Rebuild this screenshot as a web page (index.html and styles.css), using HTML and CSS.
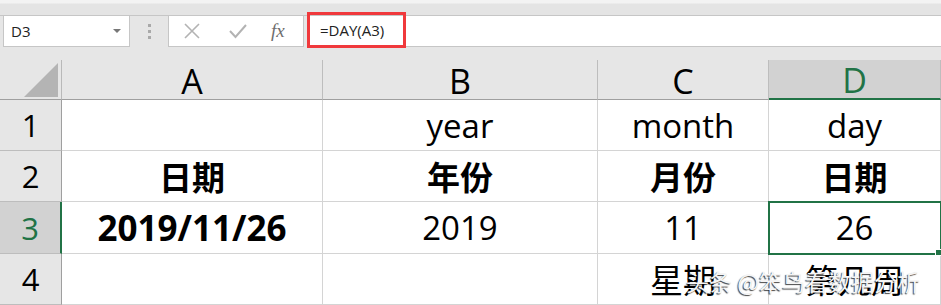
FILE: index.html
```html
<!DOCTYPE html>
<html lang="zh-CN">
<head>
  <meta charset="UTF-8">
  <title>DAY 函数</title>
  <link rel="stylesheet" href="styles.css">
</head>
<body>
  <div class="app">
    <!-- ribbon edge above the formula bar -->
    <div class="ribbon-edge"></div>

    <div class="formula-bar">
      <div class="name-box">
        <span>D3</span>
        <span class="caret"></span>
      </div>
      <div class="grip"><i></i><i></i><i></i></div>
      <div class="fx-box">
        <svg width="18" height="18" viewBox="0 0 18 18"><path d="M2 2 L16 16 M16 2 L2 16" stroke="#b3b3b3" stroke-width="1.6" fill="none"/></svg>
        <svg width="20" height="18" viewBox="0 0 20 18"><path d="M2 9 L7.5 15 L18 3" stroke="#b3b3b3" stroke-width="2" fill="none"/></svg>
        <span class="fx">fx</span>
      </div>
      <div class="formula-input">
        <span class="formula-text">=DAY(A3)</span>
      </div>
    </div>

    <div class="sheet">
      <div class="corner"><span class="corner-tri"></span></div>
      <div class="col-head">A</div>
      <div class="col-head">B</div>
      <div class="col-head">C</div>
      <div class="col-head active">D</div>

      <div class="row-head">1</div>
      <div class="cell"></div>
      <div class="cell">year</div>
      <div class="cell">month</div>
      <div class="cell">day</div>

      <div class="row-head">2</div>
      <div class="cell bold">日期</div>
      <div class="cell bold">年份</div>
      <div class="cell bold">月份</div>
      <div class="cell bold">日期</div>

      <div class="row-head active">3</div>
      <div class="cell bold date">2019/11/26</div>
      <div class="cell">2019</div>
      <div class="cell">11</div>
      <div class="cell selected">26<span class="fill-handle"></span></div>

      <div class="row-head">4</div>
      <div class="cell"></div>
      <div class="cell"></div>
      <div class="cell">星期</div>
      <div class="cell">第几周</div>
    </div>

    <div class="watermark">头条 @笨鸟看数据分析</div>
  </div>
</body>
</html>
```

FILE: styles.css
```css
/* Basic page */
body {
  margin: 0;
  background: #e6e6e6;
  font-family: "Open Sans", "Noto Sans CJK SC", sans-serif;
  color: #000;
}

.app {
  position: relative;
  width: 941px;
  height: 305px;
  overflow: hidden;
}

.ribbon-edge {
  height: 15px;
  background: linear-gradient(#f3f3f3 0, #f3f3f3 3px, #e4e4e4 4px, #e4e4e4 100%);
  border-bottom: 1px solid #c6c6c6;
}

/* Formula bar */
.formula-bar {
  display: flex;
  height: 31px;
  background: #e6e6e6;
}

.name-box {
  box-sizing: border-box;
  display: flex;
  align-items: center;
  justify-content: space-between;
  width: 127px;
  margin-left: 3px;
  padding: 0 8px 0 7px;
  background: #fff;
  border: 1px solid #c6c6c6;
  border-top: 0;
  font-size: 15px;
  color: #222;
}

.caret {
  width: 0;
  height: 0;
  border-left: 4px solid transparent;
  border-right: 4px solid transparent;
  border-top: 4px solid #777;
}

.grip {
  display: flex;
  flex-direction: column;
  justify-content: center;
  gap: 3px;
  width: 38px;
  align-items: center;
}

.grip i {
  display: block;
  width: 3px;
  height: 3px;
  background: #a9a9a9;
}

.fx-box {
  box-sizing: border-box;
  display: flex;
  align-items: center;
  width: 136px;
  padding-left: 14px;
  gap: 27px;
  background: #fff;
  border: 1px solid #c6c6c6;
  border-top: 0;
}

.fx {
  margin-left: -4px;
  font-family: "Liberation Serif", serif;
  font-style: italic;
  font-size: 19px;
  color: #6e6e6e;
}

.formula-input {
  flex: 1;
  position: relative;
  margin-left: 3px;
  background: #fff;
  border-bottom: 1px solid #c6c6c6;
  font-size: 15px;
  color: #222;
}

.formula-text {
  position: absolute;
  left: 0;
  top: -4px;
  width: 83px;
  height: 30px;
  border: 3px solid #f0393c;
  padding-left: 10px;
  line-height: 30px;
}

/* Sheet grid */
.sheet {
  display: grid;
  grid-template-columns: 62px 261px 275px 171px 172px;
  grid-template-rows: 40px 51px 51px 52px 51px;
  margin-top: 13px;
  background: #fff;
}

.corner,
.col-head,
.row-head {
  box-sizing: border-box;
  background: #e6e6e6;
  display: flex;
  align-items: center;
  justify-content: center;
}

.corner {
  position: relative;
  border-right: 1px solid #b9b9b9;
  border-bottom: 1px solid #9f9f9f;
}

.corner-tri {
  position: absolute;
  right: 3px;
  bottom: 2px;
  width: 0;
  height: 0;
  border-left: 34px solid transparent;
  border-bottom: 34px solid #b4b4b4;
}

.col-head {
  font-size: 34px;
  border-right: 1px solid #bdbdbd;
  border-bottom: 1px solid #9f9f9f;
  padding-top: 2px;
}

.col-head.active {
  background: #d2d2d2;
  color: #217346;
  border-bottom: 2px solid #217346;
}

.row-head {
  font-size: 31px;
  border-right: 1px solid #9f9f9f;
  border-bottom: 1px solid #bdbdbd;
}

.row-head.active {
  background: #d2d2d2;
  color: #217346;
  border-right: 2px solid #217346;
}

.cell {
  box-sizing: border-box;
  display: flex;
  align-items: center;
  justify-content: center;
  font-size: 33px;
  border-right: 1px solid #d4d4d4;
  border-bottom: 1px solid #d4d4d4;
}

.cell.bold {
  font-weight: bold;
}

.cell.date {
  font-size: 35px;
}

.cell.selected {
  position: relative;
  outline: 2px solid #217346;
  outline-offset: -1px;
}

.fill-handle {
  position: absolute;
  right: -2px;
  bottom: -3px;
  width: 5px;
  height: 5px;
  background: #217346;
  border: 1px solid #fff;
}

/* Watermark over row 4 */
.watermark {
  position: absolute;
  left: 686px;
  top: 264px;
  font-family: "Noto Sans CJK SC", sans-serif;
  font-size: 23px;
  color: #f5f5f5;
  text-shadow: -1px 1px 1px rgba(0, 0, 0, 0.75);
  white-space: nowrap;
}
```
